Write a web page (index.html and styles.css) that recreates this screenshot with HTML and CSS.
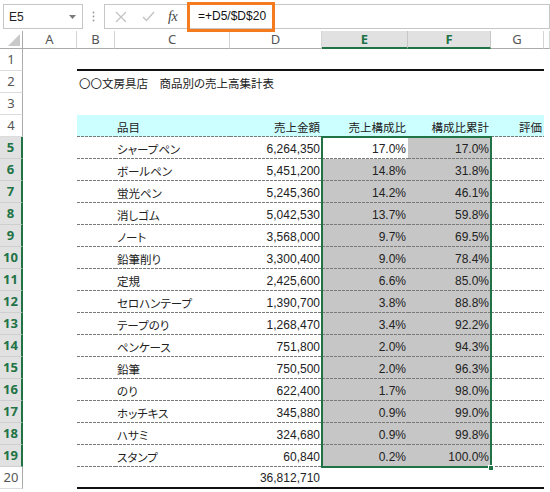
FILE: index.html
```html
<!DOCTYPE html>
<html lang="ja">
<head>
<meta charset="utf-8">
<link rel="stylesheet" href="styles.css">
</head>
<body>
<div class="fbar">
  <div class="namebox"><span>E5</span><svg class="caret" width="7" height="4" viewBox="0 0 7 4"><path d="M0 0h7L3.5 4z" fill="#7a7a7a"/></svg></div>
  <div class="grip"><svg width="3" height="11" viewBox="0 0 3 11"><circle cx="1.5" cy="1.5" r="0.9" fill="#9a9a9a"/><circle cx="1.5" cy="5.5" r="0.9" fill="#9a9a9a"/><circle cx="1.5" cy="9.5" r="0.9" fill="#9a9a9a"/></svg></div>
  <div class="fxbox">
    <svg class="ico-x" width="12" height="12" viewBox="0 0 12 12"><path d="M1 1L11 11M11 1L1 11" stroke="#c3c3c3" stroke-width="1.3" fill="none"/></svg>
    <svg class="ico-ok" width="13" height="11" viewBox="0 0 13 11"><path d="M1 6L4.5 9.5L12 1" stroke="#c3c3c3" stroke-width="1.4" fill="none"/></svg>
    <span class="fx">fx</span>
  </div>
  <div class="formula">=+D5/$D$20</div>
  <div class="callout"></div>
</div>

<div class="sheet">
  <div class="row colhead">
    <div class="corner"><svg width="23" height="18" viewBox="0 0 23 18"><path d="M20 3V15H8z" fill="#c9c9c9"/></svg></div>
    <div class="ch">A</div><div class="ch">B</div><div class="ch">C</div><div class="ch">D</div>
    <div class="ch sel">E</div><div class="ch sel">F</div><div class="ch">G</div><div class="ch"></div>
  </div>

  <div class="row"><div class="rh">1</div><div></div><div class="top"></div><div class="top"></div><div class="top"></div><div class="top"></div><div class="top"></div><div class="top"></div><div></div></div>
  <div class="row"><div class="rh">2</div><div></div><div class="cell title">〇〇文房具店　商品別の売上高集計表</div><div></div><div></div><div></div><div></div><div></div><div></div></div>
  <div class="row"><div class="rh">3</div><div></div><div></div><div></div><div></div><div></div><div></div><div></div><div></div></div>
  <div class="row hdr"><div class="rh">4</div><div></div><div class="cell t"></div><div class="cell t jp">品目</div><div class="cell t jp r">売上金額</div><div class="cell t jp r">売上構成比</div><div class="cell t jp r">構成比累計</div><div class="cell t jp r">評価</div><div></div></div>

  <div class="row"><div class="rh sel">5</div><div></div><div class="cell t"></div><div class="cell t jp">シャープペン</div><div class="cell t num">6,264,350</div><div class="cell t num act">17.0%</div><div class="cell t num s">17.0%</div><div class="cell t"></div><div></div></div>
  <div class="row"><div class="rh sel">6</div><div></div><div class="cell t"></div><div class="cell t jp">ボールペン</div><div class="cell t num">5,451,200</div><div class="cell t num s">14.8%</div><div class="cell t num s">31.8%</div><div class="cell t"></div><div></div></div>
  <div class="row"><div class="rh sel">7</div><div></div><div class="cell t"></div><div class="cell t jp">蛍光ペン</div><div class="cell t num">5,245,360</div><div class="cell t num s">14.2%</div><div class="cell t num s">46.1%</div><div class="cell t"></div><div></div></div>
  <div class="row"><div class="rh sel">8</div><div></div><div class="cell t"></div><div class="cell t jp">消しゴム</div><div class="cell t num">5,042,530</div><div class="cell t num s">13.7%</div><div class="cell t num s">59.8%</div><div class="cell t"></div><div></div></div>
  <div class="row"><div class="rh sel">9</div><div></div><div class="cell t"></div><div class="cell t jp">ノート</div><div class="cell t num">3,568,000</div><div class="cell t num s">9.7%</div><div class="cell t num s">69.5%</div><div class="cell t"></div><div></div></div>
  <div class="row"><div class="rh sel">10</div><div></div><div class="cell t"></div><div class="cell t jp">鉛筆削り</div><div class="cell t num">3,300,400</div><div class="cell t num s">9.0%</div><div class="cell t num s">78.4%</div><div class="cell t"></div><div></div></div>
  <div class="row"><div class="rh sel">11</div><div></div><div class="cell t"></div><div class="cell t jp">定規</div><div class="cell t num">2,425,600</div><div class="cell t num s">6.6%</div><div class="cell t num s">85.0%</div><div class="cell t"></div><div></div></div>
  <div class="row"><div class="rh sel">12</div><div></div><div class="cell t"></div><div class="cell t jp">セロハンテープ</div><div class="cell t num">1,390,700</div><div class="cell t num s">3.8%</div><div class="cell t num s">88.8%</div><div class="cell t"></div><div></div></div>
  <div class="row"><div class="rh sel">13</div><div></div><div class="cell t"></div><div class="cell t jp">テープのり</div><div class="cell t num">1,268,470</div><div class="cell t num s">3.4%</div><div class="cell t num s">92.2%</div><div class="cell t"></div><div></div></div>
  <div class="row"><div class="rh sel">14</div><div></div><div class="cell t"></div><div class="cell t jp">ペンケース</div><div class="cell t num">751,800</div><div class="cell t num s">2.0%</div><div class="cell t num s">94.3%</div><div class="cell t"></div><div></div></div>
  <div class="row"><div class="rh sel">15</div><div></div><div class="cell t"></div><div class="cell t jp">鉛筆</div><div class="cell t num">750,500</div><div class="cell t num s">2.0%</div><div class="cell t num s">96.3%</div><div class="cell t"></div><div></div></div>
  <div class="row"><div class="rh sel">16</div><div></div><div class="cell t"></div><div class="cell t jp">のり</div><div class="cell t num">622,400</div><div class="cell t num s">1.7%</div><div class="cell t num s">98.0%</div><div class="cell t"></div><div></div></div>
  <div class="row"><div class="rh sel">17</div><div></div><div class="cell t"></div><div class="cell t jp">ホッチキス</div><div class="cell t num">345,880</div><div class="cell t num s">0.9%</div><div class="cell t num s">99.0%</div><div class="cell t"></div><div></div></div>
  <div class="row"><div class="rh sel">18</div><div></div><div class="cell t"></div><div class="cell t jp">ハサミ</div><div class="cell t num">324,680</div><div class="cell t num s">0.9%</div><div class="cell t num s">99.8%</div><div class="cell t"></div><div></div></div>
  <div class="row"><div class="rh sel">19</div><div></div><div class="cell t"></div><div class="cell t jp">スタンプ</div><div class="cell t num">60,840</div><div class="cell t num s">0.2%</div><div class="cell t num s">100.0%</div><div class="cell t"></div><div></div></div>
  <div class="row"><div class="rh">20</div><div></div><div class="cell bot"></div><div class="cell bot"></div><div class="cell bot num">36,812,710</div><div class="cell bot"></div><div class="cell bot"></div><div class="cell bot"></div><div></div></div>

  <div class="selbox"></div>
  <div class="handle"></div>
</div>
</body>
</html>
```

FILE: styles.css
```css
* { box-sizing: border-box; }
body {
  margin: 0;
  width: 550px;
  height: 492px;
  overflow: hidden;
  background: #fff;
  font-family: "Noto Sans CJK JP", sans-serif;
  color: #222;
}

/* formula bar */
.fbar {
  position: relative;
  height: 31px;
  display: flex;
  align-items: flex-start;
  padding-top: 4px;
}
.namebox {
  margin-left: 3px;
  width: 80px;
  height: 25px;
  border: 1px solid #c6c6c6;
  display: flex;
  align-items: center;
  justify-content: space-between;
  padding: 0 6px 0 5px;
  font: 12px "Liberation Sans", sans-serif;
  color: #222;
}
.grip {
  width: 21px;
  height: 25px;
  display: flex;
  align-items: center;
  justify-content: center;
}
.fxbox {
  width: 86px;
  height: 25px;
  border: 1px solid #c6c6c6;
  display: flex;
  align-items: center;
  padding-left: 10px;
}
.ico-ok { margin-left: 15px; }
.fx {
  margin-left: 13px;
  font: italic 14px "Liberation Serif", serif;
  color: #444;
  letter-spacing: -0.5px;
}
.formula {
  flex: 1;
  height: 25px;
  border: 1px solid #c6c6c6;
  border-left: none;
  padding-left: 8px;
  font: 12px/23px "Liberation Sans", sans-serif;
  color: #111;
}
.callout {
  position: absolute;
  left: 187px;
  top: 2px;
  width: 88px;
  height: 30px;
  border: 3px solid #f47b20;
  z-index: 5;
}

/* sheet */
.sheet { position: relative; }
.row {
  display: grid;
  grid-template-columns: 23px 54px 38px 115px 92px 86px 83px 53px 6px;
  height: 22px;
}
.row > div { height: 22px; }
.colhead { height: 18px; }
.colhead > div {
  height: 18px;
  border-bottom: 1px solid #ababab;
}
.corner { border-right: 1px solid #ababab; }
.corner svg { display: block; }
.ch {
  border-right: 1px solid #d4d4d4;
  text-align: center;
  font: 13px/17px "Noto Sans", sans-serif;
  color: #555;
}
.ch.sel {
  background: #e1e1e1;
  color: #217346;
  font-weight: bold;
  border-bottom: 2px solid #217346 !important;
  border-right-color: #c6c6c6;
}

.rh {
  border-right: 1px solid #ababab;
  border-bottom: 1px solid #dcdcdc;
  text-align: center;
  font: 13px/21px "Noto Sans", sans-serif;
  color: #555;
}
.rh.sel {
  background: #e1e1e1;
  color: #217346;
  font-weight: bold;
  border-right: 2px solid #217346;
  border-bottom-color: #cfcfcf;
}

.cell {
  display: flex;
  align-items: center;
  padding: 1px 2px 0;
  white-space: nowrap;
  font-size: 11.5px;
}
.jp { font-feature-settings: "palt"; }
.r { justify-content: flex-end; }
.num {
  justify-content: flex-end;
  font-family: "Liberation Sans", sans-serif;
  font-size: 12px;
  color: #222;
}
.title {
  overflow: visible;
  font-feature-settings: "palt";
}

.top { border-bottom: 2px solid #111; }
.bot { border-bottom: 2px solid #111; }

.t {
  background-image: repeating-linear-gradient(to right, #7a7a7a 0 3px, transparent 3px 4px);
  background-size: 100% 1px;
  background-position: left bottom;
  background-repeat: no-repeat;
}
.hdr .t { background-color: #ccffff; }
.s { background-color: #c6c6c6; }
.act { background-color: #fff; }

.selbox {
  position: absolute;
  left: 321px;
  top: 105px;
  width: 171px;
  height: 332px;
  border: 2px solid #217346;
  pointer-events: none;
}
.handle {
  position: absolute;
  left: 488px;
  top: 434px;
  width: 6px;
  height: 6px;
  background: #217346;
  border: 1px solid #fff;
}
```
